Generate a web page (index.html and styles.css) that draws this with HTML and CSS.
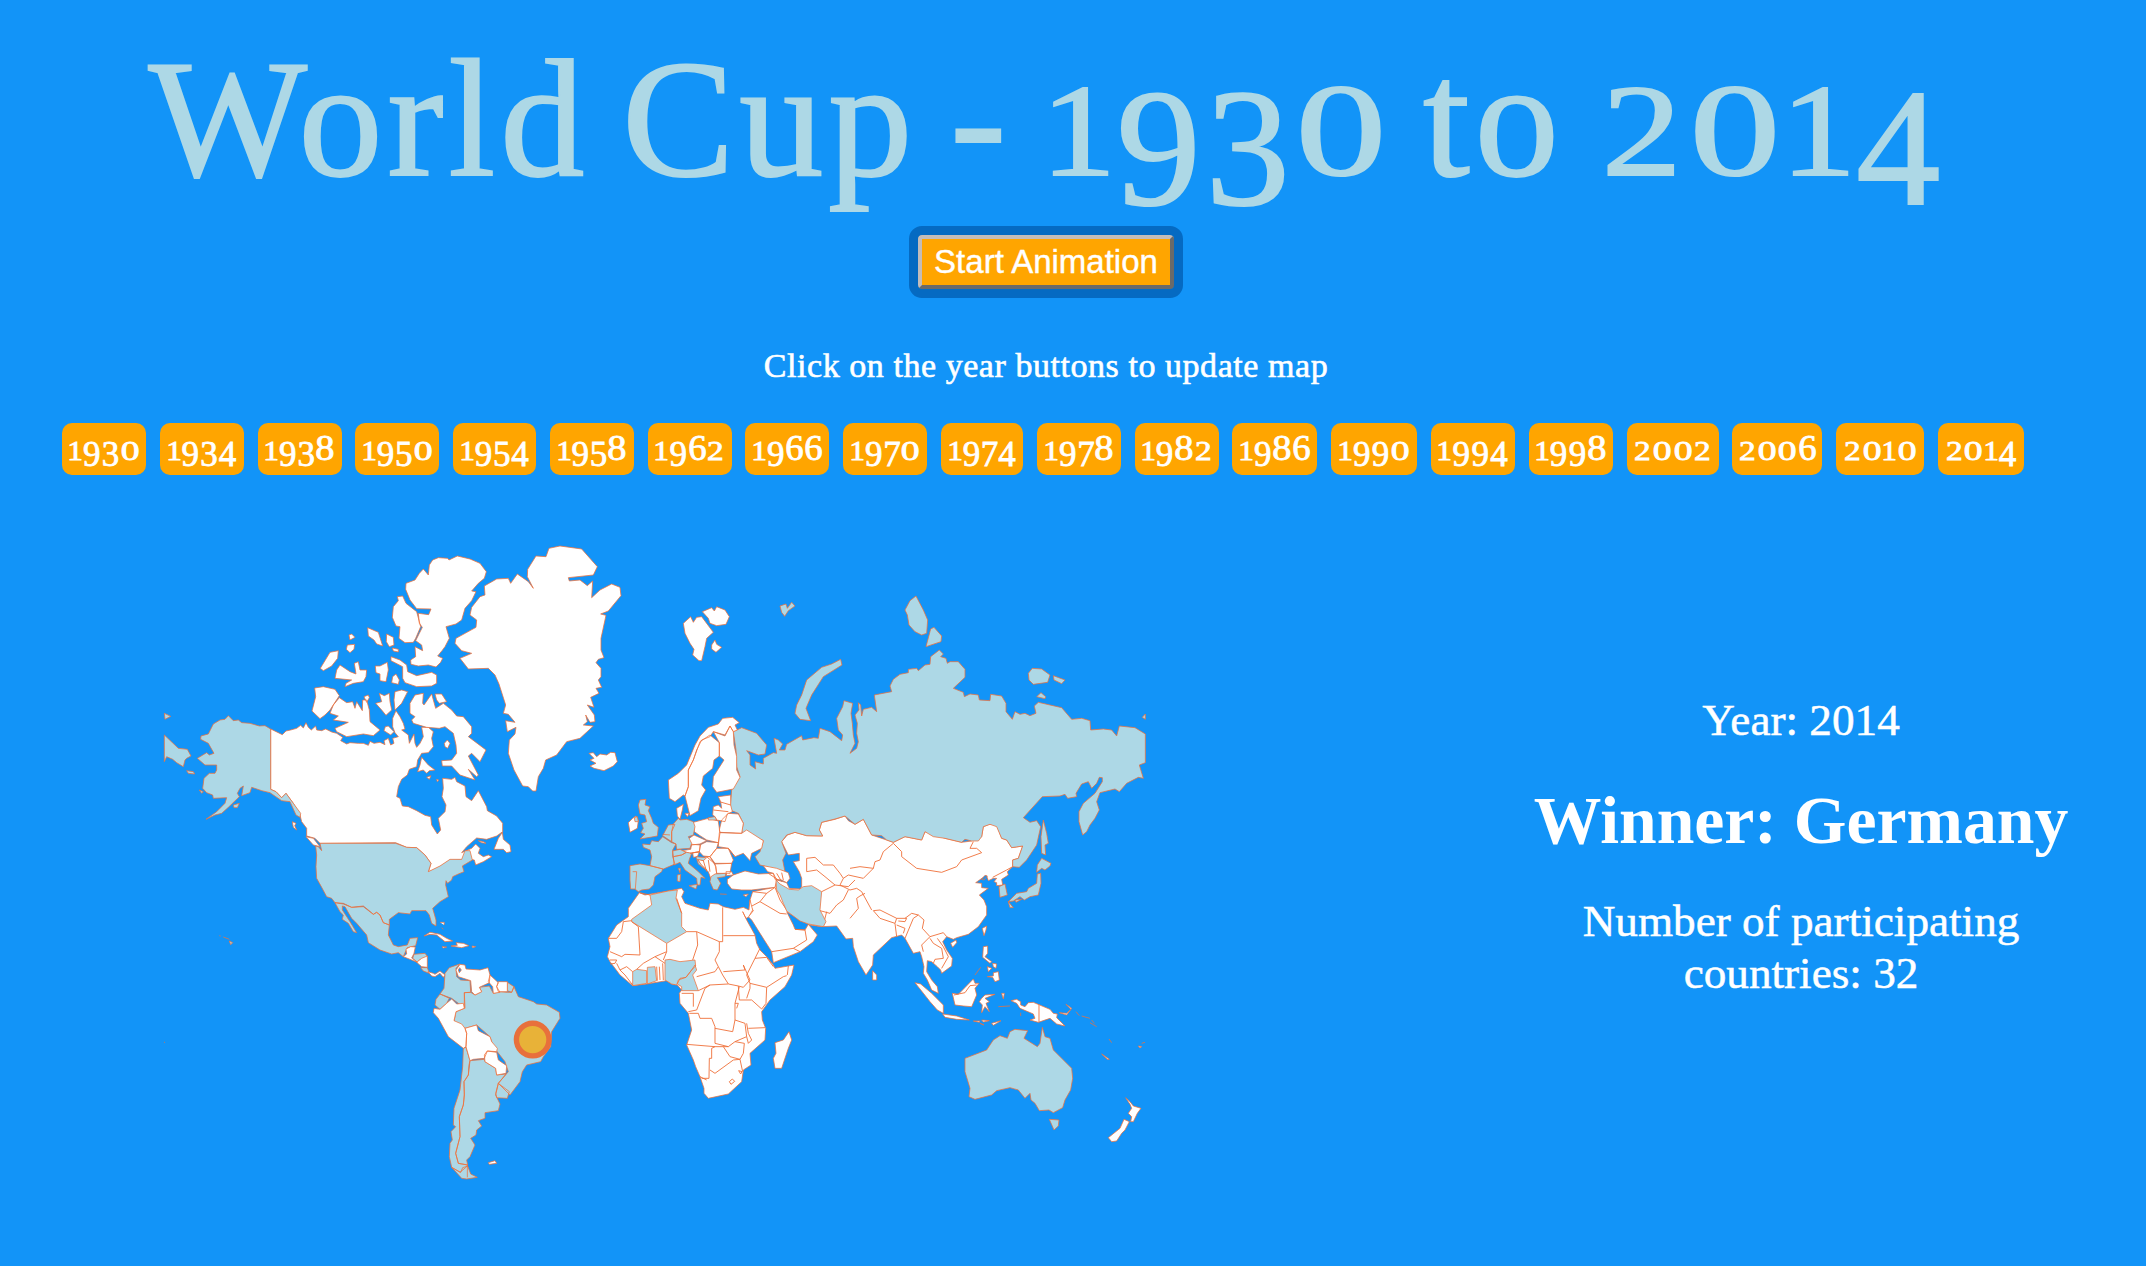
FILE: index.html
```html
<!DOCTYPE html>
<html lang="en">
<head>
<meta charset="utf-8">
<title>World Cup - 1930 to 2014</title>
<link rel="stylesheet" href="styles.css">
</head>
<body>
<header class="top">
  <h1 class="title oldstyle">World Cup - 1930 to 2014</h1>
  <button class="start">Start Animation</button>
  <p class="hint">Click on the year buttons to update map</p>
  <nav class="years">
    <a class="year oldstyle">1930</a><a class="year oldstyle">1934</a><a class="year oldstyle">1938</a><a class="year oldstyle">1950</a><a class="year oldstyle">1954</a><a class="year oldstyle">1958</a><a class="year oldstyle">1962</a><a class="year oldstyle">1966</a><a class="year oldstyle">1970</a><a class="year oldstyle">1974</a><a class="year oldstyle">1978</a><a class="year oldstyle">1982</a><a class="year oldstyle">1986</a><a class="year oldstyle">1990</a><a class="year oldstyle">1994</a><a class="year oldstyle">1998</a><a class="year oldstyle">2002</a><a class="year oldstyle">2006</a><a class="year oldstyle">2010</a><a class="year oldstyle">2014</a>
  </nav>
</header>
<main class="content">
<svg class="map" viewBox="150 530 1010 660" width="1010" height="660">
  <!-- Canada, Alaska and the Arctic islands -->
  <g transform="translate(150 530) scale(.33333)">
    <path class="land" d="M362 597 397 614 408 603 422 600 440 595 452 586 460 594 468 578 475 592 484 600 497 588 500 600 515 602 527 597 545 606 560 610 578 622 572 632 590 642 600 638 625 640 640 640 655 646 660 634 672 640 690 637 705 644 702 632 715 625 722 645 732 640 728 625 745 620 735 608 728 590 728 565 738 542 750 560 760 580 765 597 755 600 775 615 778 640 792 612 795 640 800 652 810 640 820 620 815 592 835 592 850 605 845 625 850 650 835 668 815 670 803 690 800 710 778 718 772 735 755 748 745 770 740 800 750 805 757 828 775 830 800 842 825 856 842 860 845 885 862 912 872 900 865 865 885 845 888 825 876 800 880 775 878 745 905 748 915 742 920 755 945 768 948 800 965 812 985 782 1010 830 1012 842 1040 858 1058 880 1058 905 1040 918 1010 928 980 924 950 950 935 968 965 955 977 942 990 955 985 970 1000 980 1015 975 1025 980 1000 995 977 1005 973 990 958 988 900 990 870 1010 835 1027 843 1000 825 975 800 953 770 952 737 938 510 940 495 925 470 918 470 895 455 875 450 855 430 820 408 790 395 803 378 785 362 778Z"/>
    <path class="land" d="M848 90 865 83 893 85 897 90 922 78 960 87 990 100 1009 125 1003 145 985 160 965 183 978 185 965 212 945 235 935 270 918 282 888 290 898 325 885 350 876 362 863 378 878 385 872 397 858 411 835 405 805 408 783 403 782 390 797 380 795 350 818 362 815 345 797 332 808 310 817 292 808 280 805 250 836 254 843 237 800 236 780 210 767 178 768 160 795 150 808 130 820 117 835 135 838 105Z
     M742 200 758 198 768 220 800 245 812 290 797 325 790 337 765 338 747 325 750 290 738 288 727 262 730 230 745 212Z
     M653 293 685 307 698 348 680 342 672 330 655 318Z M710 312 730 322 732 345 718 350 709 335Z M727 354 745 358 745 366 730 363Z
     M597 315 605 312 615 322 600 330Z M592 345 614 343 612 358 600 368 589 358Z M540 367 565 362 563 385 545 408 520 422 511 415Z
     M570 405 600 425 618 432 613 400 625 395 630 420 650 420 648 440 640 455 610 460 585 470 588 460 605 450 555 445 560 420Z
     M676 408 690 408 712 397 715 420 708 455 690 452 690 432 678 428Z M728 440 738 432 748 450 745 463 725 458Z
     M723 380 750 390 770 405 773 425 800 437 845 427 860 435 860 460 845 468 800 470 765 458 758 445 758 410 723 392Z
     M494 474 520 470 555 478 568 497 540 540 525 555 510 566 486 543 497 500Z
     M568 503 590 518 608 515 615 535 620 515 637 542 638 510 650 510 658 540 660 575 690 600 670 617 640 612 590 620 560 605 555 595 595 577 550 570 565 558 540 550 550 525Z
     M642 500 655 495 658 503 650 517Z M688 490 703 497 718 490 720 515 725 540 708 556 695 540 677 520 695 515Z
     M735 485 755 480 773 485 755 520 735 540 732 510Z M706 590 715 588 732 605 722 615 702 602Z
     M820 490 818 520 822 525 845 492 857 535 880 520 905 540 920 558 940 560 965 590 965 610 955 620 975 635 1008 660 990 695 965 670 955 678 985 735 980 740 955 718 975 750 930 735 905 708 877 708 875 692 905 690 920 670 918 645 910 610 885 590 868 595 830 592 790 580 785 570 795 560 780 550 780 520 795 495Z
     M855 492 875 492 890 515 868 520 860 510Z M883 640 892 630 900 640 893 655 885 650Z
     M815 682 835 705 855 720 838 722 830 730 820 720 803 725 810 705Z M830 742 843 737 838 748Z M860 748 866 750 862 755Z
     M427 875 438 880 434 887 440 900 430 892Z M468 920 490 925 510 950 490 945Z
     M1057 907 1060 928 1080 945 1083 965 1070 968 1060 958 1032 958 1045 925Z M985 932 1000 935 1008 940 995 938Z"/>
    <path class="in" d="M235 557 250 572 265 570 275 578 300 580 328 588 345 587 362 597 362 778 378 785 395 803 408 790 430 820 452 850 450 862 438 855 420 815 395 812 360 788 335 782 305 772 300 788 275 797 280 768 270 775 262 790 268 800 235 832 215 850 195 855 168 868 200 845 225 820 230 803 190 805 188 795 170 788 158 775 162 745 178 730 195 730 200 720 200 705 165 705 142 685 170 668 178 675 192 670 175 640 152 628 153 618 175 612 190 582 210 570 225 568Z
     M43 615 85 655 112 658 123 678 110 685 105 690 100 710 80 698 68 688 50 680 43 695Z M43 550 62 559 45 568Z M110 722 130 725 134 732 115 730Z M250 825 268 820 262 833 252 833Z M148 780 160 785 155 790Z"/>
  </g>
  <!-- United States, Central and South America -->
  <g transform="translate(150 800) scale(.33333)">
    <path class="in" d="M510 130 737 130 770 142 800 143 825 165 843 190 835 215 870 198 900 178 935 178 945 152 960 152 967 180 937 198 942 215 925 222 908 230 905 240 893 250 888 242 887 255 895 290 870 305 848 325 858 360 858 378 845 370 838 345 828 332 785 332 780 342 745 338 718 358 718 375 700 368 690 345 680 337 670 343 655 330 640 318 605 322 580 310 555 308 545 295 530 290 515 262 500 235 498 200 500 165 497 138 505 140 515 152Z
     M555 308 580 312 605 322 640 320 670 343 680 337 690 345 700 368 718 375 715 405 730 435 745 440 772 435 780 415 803 413 797 437 772 443 765 458 760 470 745 458 725 462 690 450 655 428 650 405 620 370 605 355 585 320 577 318 577 330 600 365 620 398 610 395 595 370 577 358 580 345 570 335Z
     M792 463 825 460 833 470 808 480 802 487 788 475Z M812 503 832 503 838 520 820 513Z
     M885 520 898 503 930 492 918 505 920 530 932 540 960 542 962 577 943 578 945 625 925 610 905 595 870 582 882 565Z
     M1072 547 1092 560 1085 577 1072 572Z
     M1092 560 1105 590 1150 605 1160 612 1190 615 1228 637 1230 655 1205 695 1202 740 1180 770 1172 785 1130 795 1117 815 1110 845 1080 885 1045 850 1075 815 1065 785 1030 740 1020 710 980 675 945 685 912 665 918 635 943 625 943 578 962 577 975 585 995 575 988 562 1018 558 1030 580 1050 575 1072 577 1085 577Z
     M870 582 898 595 890 610 870 628 855 615 858 598Z
     M940 745 948 742 960 782 957 795 955 825 942 845 943 885 940 915 928 950 930 1010 917 1060 925 1090 953 1095 950 1100 930 1117 905 1102 898 1070 900 1030 907 1020 903 995 917 980 910 975 912 925 930 870 938 800Z
     M960 782 1003 778 1005 785 1037 805 1040 825 1068 822 1045 850 1037 885 1050 912 1045 932 1005 938 1005 955 985 962 995 978 980 990 978 1005 962 1015 975 1035 960 1070 950 1080 953 1095 925 1090 917 1060 930 1010 928 950 940 915 943 885 942 845 955 825Z
     M1045 850 1078 875 1072 895 1040 893 1037 880Z M905 1102 932 1117 938 1103 953 1098 962 1122 982 1132 950 1137 935 1135Z M952 1098V1132
     M238 423 248 428 242 434Z M220 411 238 418 M208 407 212 408"/>
    <path class="land" d="M760 470 770 462 768 447 782 440 796 441 792 460 785 474 802 487 785 480Z M800 487 815 475 832 468 832 502 815 500Z M834 515 850 520 855 523 870 513 885 525 880 532 870 520 855 530 845 528Z
     M822 408 840 397 870 403 890 415 908 423 885 425 860 405 840 403Z M903 438 922 436 918 428 940 430 957 437 935 443Z M876 440 890 441 880 444Z M966 438 977 440 968 443Z M870 367 883 367 882 375 M875 383 880 388
     M930 493 945 495 948 507 990 510 1014 503 1020 525 1018 548 988 562 995 575 975 585 965 575 962 542 940 535 925 530 918 510Z
     M1020 525 1045 548 1040 560 1050 577 1030 580 1028 560 1015 545Z M1045 545 1072 545 1072 575 1045 575 1040 560Z
     M905 597 920 612 940 610 943 625 918 635 912 662 935 672 945 685 950 700 948 740 940 745 895 710 865 655 850 638 852 625 870 628 890 610Z
     M945 685 980 675 985 692 1020 710 1025 725 1042 745 1040 755 1012 753 1003 775 970 778 960 782 948 740 950 700Z
     M1003 765 1012 753 1040 757 1045 780 1070 797 1068 820 1040 825 1037 805 1005 785Z M1015 1088 1035 1082 1040 1090 1018 1093Z M42 727 45 727"/>
    <path class="sea" d="M929 503 934 510 928 518 925 510Z"/>
  </g>
  <!-- Greenland, Iceland, Svalbard -->
  <g transform="translate(400 530) scale(.33333)">
    <path class="land" d="M447 55 480 48 545 57 592 110 580 135 505 143 508 153 540 150 562 167 578 153 575 203 600 180 635 162 660 172 663 197 625 243 602 252 618 256 603 325 603 360 612 383 595 388 588 398 603 415 603 440 595 450 605 472 588 475 597 490 572 502 582 532 562 525 583 555 585 575 570 577 557 555 562 575 550 585 580 588 540 625 500 635 470 675 437 690 430 715 415 740 408 783 398 783 385 770 368 768 342 720 325 670 328 630 345 612 348 592 322 605 317 572 345 577 325 553 310 550 317 525 297 462 285 435 265 415 205 417 180 385 215 370 185 362 165 340 168 325 228 292 230 270 210 255 215 232 240 200 255 195 253 168 290 147 325 145 332 160 352 132 385 155 400 175 382 140 383 118 408 78 438 80Z
     M567 670 580 668 590 680 600 672 620 675 632 667 645 668 652 695 640 708 612 722 582 715 570 708 588 700 570 690 582 685Z
     M850 280 872 260 880 277 890 262 905 260 940 307 920 325 915 350 905 392 897 392 878 375 882 358 870 340 855 310Z M907 245 935 233 943 243 950 230 975 240 988 260 978 283 950 287 930 280 925 265Z M935 345 945 330 950 343 965 352 948 367 935 357Z"/>
  </g>
  <!-- Mainland Asia -->
  <g transform="translate(850 840) scale(.33333)">
    <path class="land" d="M-205 5-188-15-165-23-130-13-82-12-92-30-85-53-45-62-15-72-5-58 15-47 40-62 65-15 110 0 130 7 165-10 215 0 225-25 250-18 285-5 335 7 365 3 395-10 400-40 420-48 440-45 455-5 470 0 485 23 518 18 505 55 488 60 488 80 472 95 475 105 455 118 458 135 440 137 440 128 432 125 440 115 430 115 415 122 410 108 400 112 377 128 395 130 395 143 415 145 388 165 402 180 410 200 410 225 385 260 355 283 320 293 310 298 290 290 278 305 290 330 307 355 305 378 275 400 272 390 262 380 245 365 232 362 230 395 245 420 262 440 265 460 245 450 232 420 220 400 222 380 215 350 210 335 190 340 165 295 155 285 125 293 70 345 68 375 48 405 25 365 10 320 8 295-12 297-40 258-85 260-120 255-150 240-190 215-170 255-165 268-135 270-125 253-98 285-110 305-150 335-230 368-235 335-270 280-295 240-305 230-300 180-292 155-225 142-220 120-190 128-182 145-150 147-145 140-145 115-152 95-170 65-152 62-152 40-185 45Z"/>
    <path class="line" d="M-130 95V55L-105 52-80 75-50 75-30 100-20 115-5 105 40 115 70 85 75 65 90 60 100 35 130 10M-130 95-100 90-75 110-45 135-85 155M-20 115-30 135 0 150 20 145 35 155 65 210M45 160 30 168 20 175 25 205 0 235M-45 135-5 140 15 120M0 85 30 80 70 85M-90 212-60 220-40 195-20 180-5 150M-80 255-70 215M130 10 155 35 155 50 200 85 275 97 320 80 335 60 395 38 380 25 360 25 370 5M428 112 470 90 488 80M70 212 90 210 140 235 135 250 90 235ZM140 235 170 235 165 245 145 243M135 250 140 290M140 255 165 265 160 280M165 295 190 235 205 225 185 220 165 235M205 225 222 240 217 265 240 290 280 278 290 290M240 290 215 315 220 335M240 295 250 310 275 325 280 355 255 358 250 370M262 295 280 320 295 350 275 385M-292 155-250 160-270 185-298 200-290 212M-250 160-225 142-210 180-190 210M-270 185-210 220-190 222M-235 335-170 325-150 335M-170 325-130 300-135 270-165 268M-305 230-290 212"/>
    <path class="in" d="M447 140 465 132 472 165 450 172Z M575 55 603 70 600 78 585 90 575 85 560 97 562 75Z M562 102 572 100 573 130 565 165 540 170 523 180 510 170 490 183 475 185 490 203 480 203 475 185 500 160 530 155 535 145 560 130Z M495 180 515 178 498 187Z
      M345 655 410 630 430 600 450 587 472 595 480 575 495 568 533 572 522 595 562 620 570 610 577 562 585 590 600 595 610 630 635 655 665 685 668 715 662 750 645 780 638 803 610 818 597 810 568 812 555 790 543 780 540 760 525 775 505 750 480 743 440 752 425 765 375 778 357 770 360 745 345 695Z M598 838 627 840 625 858 612 870Z"/>
    <path class="land" d="M68 392 80 405 80 420 68 420Z M397 265 410 258 408 270 402 287Z M302 310 318 300 320 308 308 322Z
      M400 320 413 318 413 340 405 350 425 365 420 370 398 352Z M428 370 440 372 438 385 430 380Z M412 380 425 385 415 395Z M412 410 430 408 430 398 445 395 448 420 435 425 428 412Z M375 405 392 382
      M195 428 212 432 245 460 280 495 280 520 262 510 240 485Z M278 522 320 528 358 540 320 538 285 532Z
      M307 460 325 463 370 417 375 430 387 430 375 445 380 465 365 500 340 498 315 495Z M395 475 405 465 435 463 405 475 418 485 408 490 418 515 405 500 395 518 397 495 388 485Z
      M370 543 390 543 388 547Z M395 540 418 542 400 546Z M425 550 453 542 430 556Z M390 550 402 555Z M455 460 463 460 460 477Z M445 500 480 498 M512 518V528
      M483 482 500 478 512 485 512 495 525 500 535 488 550 487 600 508 610 520 622 522 620 533 645 558 620 552 600 535 565 547 540 540 555 535 550 522 510 505 500 490Z
      M628 518 650 520 663 508 648 493 665 505 650 525Z M678 515 688 527 M695 528 720 535 M720 548 740 560 M725 540 733 550 M777 597 785 608 M755 642 778 658 772 658Z M865 618 875 620 870 624Z M875 610 885 607
      M827 773 840 785 850 798 873 805 862 820 850 845 842 845 845 830 835 820 845 805 840 793Z M822 838 838 845 825 870 815 880 800 903 785 905 775 893 810 865Z"/>
    <path class="line" d="M567 493V547M312 465 345 458 360 437 380 435"/>
  </g>
  <!-- Russia -->
  <g transform="translate(780 580) scale(.33333)">
    <path class="in" d="M-115 443-70 460-40 495-45 522-65 525-100 512-90 525-90 555-73 567-75 545-50 552-50 535-20 518-10 520-18 475-5 480 8 492-2 510 15 510 20 493 65 467 68 480 102 473 115 475 120 445 150 455 185 482 188 465 175 450 170 415 188 380 192 362 218 370 213 400 217 430 220 465 225 490 210 520 230 505 235 485 230 460 232 430 225 405 237 390 235 368 242 375 245 408 250 388 275 382 290 395 283 345 335 335 330 318 340 298 360 283 385 278 385 268 410 265 415 272 435 255 450 253 452 230 478 210 490 222 482 230 498 235 502 250 510 245 535 245 555 268 555 292 520 325 550 337 553 350 570 342 595 345 598 360 630 362 632 343 665 348 678 370 678 395 697 418 705 395 720 403 735 400 750 407 768 400 763 378 775 367 845 383 875 418 905 415 930 422 932 450 970 447 995 450 1010 468 1018 438 1065 443 1096 462 1096 548 1078 555 1090 595 1075 592 1040 610 1018 635 1005 627 960 638 950 665 958 690 945 715 930 735 920 755 908 765 897 725 897 695 910 670 945 640 967 605 967 593 958 592 950 610 935 625 925 605 905 612 888 640 890 650 863 655 855 643 840 648 787 650 730 713 750 727 770 722 782 740 770 795 740 840 718 862 698 860 698 840 715 835 728 798 695 803 680 780 665 775 650 740 630 733 610 740 605 770 595 783 575 783 555 778 545 787 495 775 460 770 435 755 425 780 375 770 340 787 320 780 305 767 275 765 250 718 225 733 195 708 165 717 125 727 118 750 128 768 80 767 45 757 20 765 5 785 18 820 8 840 15 875-5 870-60 855-75 830-60 815-50 782-115 755-110 730-125 700-150 690-145 630-120 590-130 560-132 510-140 455Z
     M375 90 390 62 408 48 430 90 443 120 440 160 425 165 405 155 387 135 382 105Z M452 147 462 142 485 168 483 185 438 200Z M182 238 186 255 130 290 95 345 78 385 92 422 60 418 45 400 50 375 65 345 80 300 125 262 155 252Z M745 280 757 265 785 267 810 285 803 307 760 313 747 300Z M820 287 855 300 845 311 822 300Z M770 350 783 338 797 350 795 356Z M1087 412 1096 402 1096 418Z M790 720 800 760 805 790 795 795 797 825 785 820 783 770Z M0 78 18 72 22 85 35 67 45 78 25 92 14 109 5 97Z"/>
    <path class="sea" d="M605 898 615 886 622 888 612 900Z"/>
  </g>
  <!-- Europe and Turkey -->
  <g transform="translate(600 690) scale(.33333)">
    <path class="land" d="M205 270 235 250 260 225 285 165 300 138 325 112 355 102 368 85 398 82 418 98 405 105 412 120 400 125 390 108 375 135 340 125 330 140 305 150 290 180 280 210 265 240 265 290 255 318 250 315 225 335 208 325Z
     M330 135 358 158 358 198 342 210 338 235 310 258 305 285 317 300 303 325 295 362 270 377 255 318 265 290 265 240 280 210 300 155Z
     M340 125 375 138 390 108 400 125 402 165 410 200 410 240 420 262 400 297 350 307 338 290 340 260 372 210 358 198 358 158Z
     M230 355 250 343 247 360 240 388 232 378Z M255 370 268 370 262 380Z M85 398 98 385 108 378 115 392 112 415 90 427Z
     M280 397 325 385 355 393 360 430 355 458 320 450 300 437 283 425Z M265 447 282 435 320 452 300 462 275 465Z M245 482 272 478 275 463 302 465 298 485 270 490Z
     M300 465 320 455 355 458 350 475 330 500 310 498 298 485Z M330 500 350 475 385 475 400 510 395 520 345 520Z
     M358 428 425 430 440 420 490 452 485 475 455 490 450 512 430 490 405 500 385 475 355 470Z M358 420 365 390 385 370 415 372 430 400 425 430 360 427Z
     M355 320 392 315 392 345 397 365 382 372 375 395 350 390 345 380 338 375 340 350 355 345 365 355 362 335Z
     M295 507 310 512 315 500 330 500 348 530 350 550 332 565 325 545 300 525Z M345 522 395 520 390 550 350 550Z M278 488 298 486 292 500 280 502Z
     M378 545 395 545 400 555 380 557Z M382 568 400 555 435 543 475 552 520 550 530 570 525 592 455 600 425 600 395 597 382 580Z
     M490 527 530 535 565 548 570 565 560 578 545 570 525 568 520 550 503 545Z M430 615 445 612 438 620Z M360 612 380 613"/>
    <path class="in" d="M120 330 138 328 135 345 150 350 145 362 155 385 160 400 175 412 172 438 150 442 120 447 135 432 122 428 130 415 125 400 140 395 135 375 120 372 115 345Z M103 383 112 380 115 395 105 395Z
     M90 527 120 522 150 527 188 537 185 545 165 560 160 585 148 597 125 600 115 605 105 597 92 597 90 570Z M98 545 110 545 106 597
     M128 462 150 464 155 452 175 455 188 440 215 458 228 462 218 480 218 500 225 522 190 537 150 527 155 500 150 480 130 472Z
     M188 437 205 405 225 403 215 425 215 455Z M188 433 210 435 M220 402 235 385 240 390 260 388 280 395 285 410 280 435 265 440 275 460 270 475 230 478 228 462 215 455 215 425Z
     M218 483 240 478 258 487 245 495 220 500Z M220 500 245 495 260 487 275 490 268 508 265 520 295 545 315 565 303 562 300 585 292 585 290 565 255 540 240 517 222 525Z
     M267 587 292 583 288 597Z M232 555 242 553 240 575 232 573Z M235 535 241 535 240 548Z M325 383 345 380 350 390 325 390Z M288 500 320 503 310 512 292 508 305 525 320 540 295 522Z
     M333 560 345 552 378 550 375 560 352 563 362 580 352 600 340 598 330 575Z
     M528 570 540 582 568 598 595 600 610 590 635 587 665 605 660 660 678 695 670 710 625 702 600 693 560 663 550 640 540 615 530 600Z"/>
    <path class="line" d="M340 360 385 365M358 335 392 345M310 512 320 545M325 510 330 545M345 522 320 500M505 550 535 570M530 550 545 575M545 548 550 570M385 475 405 500M270 490 300 485"/>
  </g>
  <!-- Africa -->
  <g transform="translate(600 860) scale(.33333)">
    <path class="land" d="M118 98 135 105 205 93 245 85 252 95 245 110 255 130 300 145 325 150 330 130 355 132 370 140 405 148 430 142 447 150 450 120 458 150 445 172 438 175 428 155 440 180 465 225 470 250 480 270 500 290 520 315 525 325 582 315 575 345 555 380 510 420 485 455 487 480 497 505 495 540 450 580 453 615 430 630 425 665 385 702 325 715 312 700 312 685 300 650 287 620 280 600 260 555 275 510 265 460 240 430 238 400 245 390 232 375 215 372 200 362 140 372 98 377 60 345 30 305 22 290 30 260 25 235 50 195 85 170 85 145Z M567 515 575 540 565 565 545 625 525 625 520 595 528 580 525 548 550 540Z"/>
    <path class="in" d="M150 105 205 93 232 90 228 115 245 160 245 200 260 215 200 250 95 185 95 178 155 135Z M98 335 110 328 140 332 140 370 98 377Z M142 322 165 320 170 362 142 372Z M195 300 210 298 240 305 285 300 287 318 275 330 258 352 235 360 230 375 215 372 195 360Z M285 315 290 330 278 345 295 392 245 392 245 380 232 372 240 355 258 352 275 330Z"/>
    <path class="line" d="M118 98 150 105M95 182 70 185 65 215 50 235 25 235M115 200 120 285 75 283 65 290 30 275M115 200 95 185M200 250V275L165 290 130 310 110 328M200 275 190 300M165 290 195 310M245 160 230 115M260 215 290 215 358 245 358 275 345 300 355 320 345 335 290 350M290 215 293 255 278 300M368 142V245H358M370 227H465M355 320 368 345 385 372 415 378 430 382 450 360 430 315 435 330 370 335M480 265 465 295 440 345 450 370 500 382 550 350 560 347M465 295 500 292 520 320M500 382 498 430 485 447M415 378 418 420 455 420 485 447M295 392 330 375 385 372M330 375 315 385 290 450 265 455M245 400 280 400 280 440M418 380 405 430 405 480 435 490 440 530 405 545 385 560 345 550 345 500 335 475 300 475 295 460 268 460M405 430 415 430 410 445M405 480 398 515 345 505M440 490 445 520 455 540 445 550 440 530M445 505 495 503M450 370 450 385 440 415M260 553 345 560 385 560M345 560 335 565 335 595 328 595 327 655 305 655M330 630 345 640 400 600 420 598 430 580 433 550 405 545M370 560 390 590 420 598 428 635M300 650 320 660M388 665 397 657 404 664 393 673ZM416 632 426 635 422 642ZM30 300 50 300 45 310 30 312M50 310 60 330 75 345 98 375M60 330 80 320 98 335M178 320 180 360M170 320 172 362M188 310 190 360M565 318 562 345"/>
  </g>
  <circle class="host" cx="532.7" cy="1039.6" r="16.3"/>
</svg>
<aside class="facts">
  <p class="fact">Year: 2014</p>
  <h2 class="winner">Winner: Germany</h2>
  <p class="fact">Number of participating countries: 32</p>
</aside>
</main>
<script src="digits.js"></script>
</body>
</html>
```

FILE: styles.css
```css
body {
  margin: 0;
  height: 1266px;
  overflow: hidden;
  background: #1294f8;
  color: #fff;
  font-family: "Liberation Serif", "Times New Roman", serif;
}

.top {
  display: flex;
  flex-direction: column;
  align-items: center;
  width: 2092px;
  padding-top: 18px;
}

.title {
  margin: 0;
  height: 200px;
  color: #add8e6;
  font-size: 168px;
  font-weight: 400;
  line-height: 200px;
  letter-spacing: 5px;
  word-spacing: -14px;
  white-space: nowrap;
  -webkit-text-stroke: 2px #add8e6;
}

.start {
  box-sizing: border-box;
  width: 256px;
  height: 54px;
  margin: 17px 0 0;
  padding: 0;
  border: 4px solid;
  border-color: #c4bcb9 #6a6a6a #6a6a6a #c4bcb9;
  border-radius: 4px;
  outline: 9px solid #056ac2;
  background: #ffa500;
  color: #fff;
  font: 33px/44px "Liberation Sans", Arial, sans-serif;
  -webkit-text-stroke: .4px #fff;
}

.hint {
  margin: 56.5px 0 0;
  font-size: 34px;
  line-height: 40px;
  letter-spacing: .55px;
  -webkit-text-stroke: .6px #fff;
}

.years {
  display: grid;
  grid-template-columns: 84px 84px 84px 84px 83px 84px 84px 84px 84px 82px 84px 84px 85px 86px 84px 84px 92px 90px 88px 86px;
  justify-content: space-between;
  width: 1962px;
  margin: 37px 6px 0 0;
}

.year {
  height: 52.5px;
  border-radius: 10px;
  background: #ffa500;
  text-align: center;
  font-size: 35px;
  line-height: 51px;
  white-space: nowrap;
  -webkit-text-stroke: .8px #fff;
}

/* old-style figures */
.digit {
  display: inline-block;
  line-height: 0;
  letter-spacing: 0;
  text-align: center;
}
.digit-0, .digit-1, .digit-2 { font-size: .78em; }
.digit-0 { width: .749em; transform: scaleX(1.38); }
.digit-1 { width: .526em; transform: scaleX(1.15); }
.digit-2 { width: .682em; transform: scaleX(1.22); }
.digit-3, .digit-4, .digit-5, .digit-7, .digit-9 { vertical-align: -.172em; }
.digit-3 { width: .525em; }
.digit-4 { width: .538em; }
.digit-5 { width: .503em; }
.digit-6 { width: .539em; transform: scaleX(1.05); }
.digit-7 { width: .478em; }
.digit-8 { width: .567em; transform: scaleX(1.1); }
.digit-9 { width: .539em; }

.content {
  display: flex;
  margin: 54.5px 0 0 150px;
}

.map { flex: none; }
.map path {
  stroke: #f0703a;
  stroke-opacity: .75;
  stroke-width: 1;
  stroke-linejoin: round;
  vector-effect: non-scaling-stroke;
}
.map .land { fill: #fff; }
.map .in { fill: #add8e6; }
.map .sea { fill: #1294f8; }
.map .line {
  fill: none;
  stroke-opacity: .9;
}
.host {
  fill: #e8b238;
  stroke: #e8703c;
  stroke-width: 5.4;
}

.facts {
  width: 560px;
  margin-left: 361px;
  padding-top: 165px;
  text-align: center;
}
.fact {
  margin: 0;
  font-size: 45.2px;
  line-height: 51.5px;
  -webkit-text-stroke: .5px #fff;
}
.winner {
  margin: 36px 0 36px;
  font-size: 67.7px;
  line-height: 78px;
  white-space: nowrap;
}
```

FILE: digits.js
```js
// Wraps each figure so that it can be set as an old-style numeral.
document.querySelectorAll('.oldstyle').forEach(function (el) {
  el.innerHTML = el.textContent.replace(/\d/g, function (d) {
    return '<span class="digit digit-' + d + '">' + d + '</span>';
  });
});
```
